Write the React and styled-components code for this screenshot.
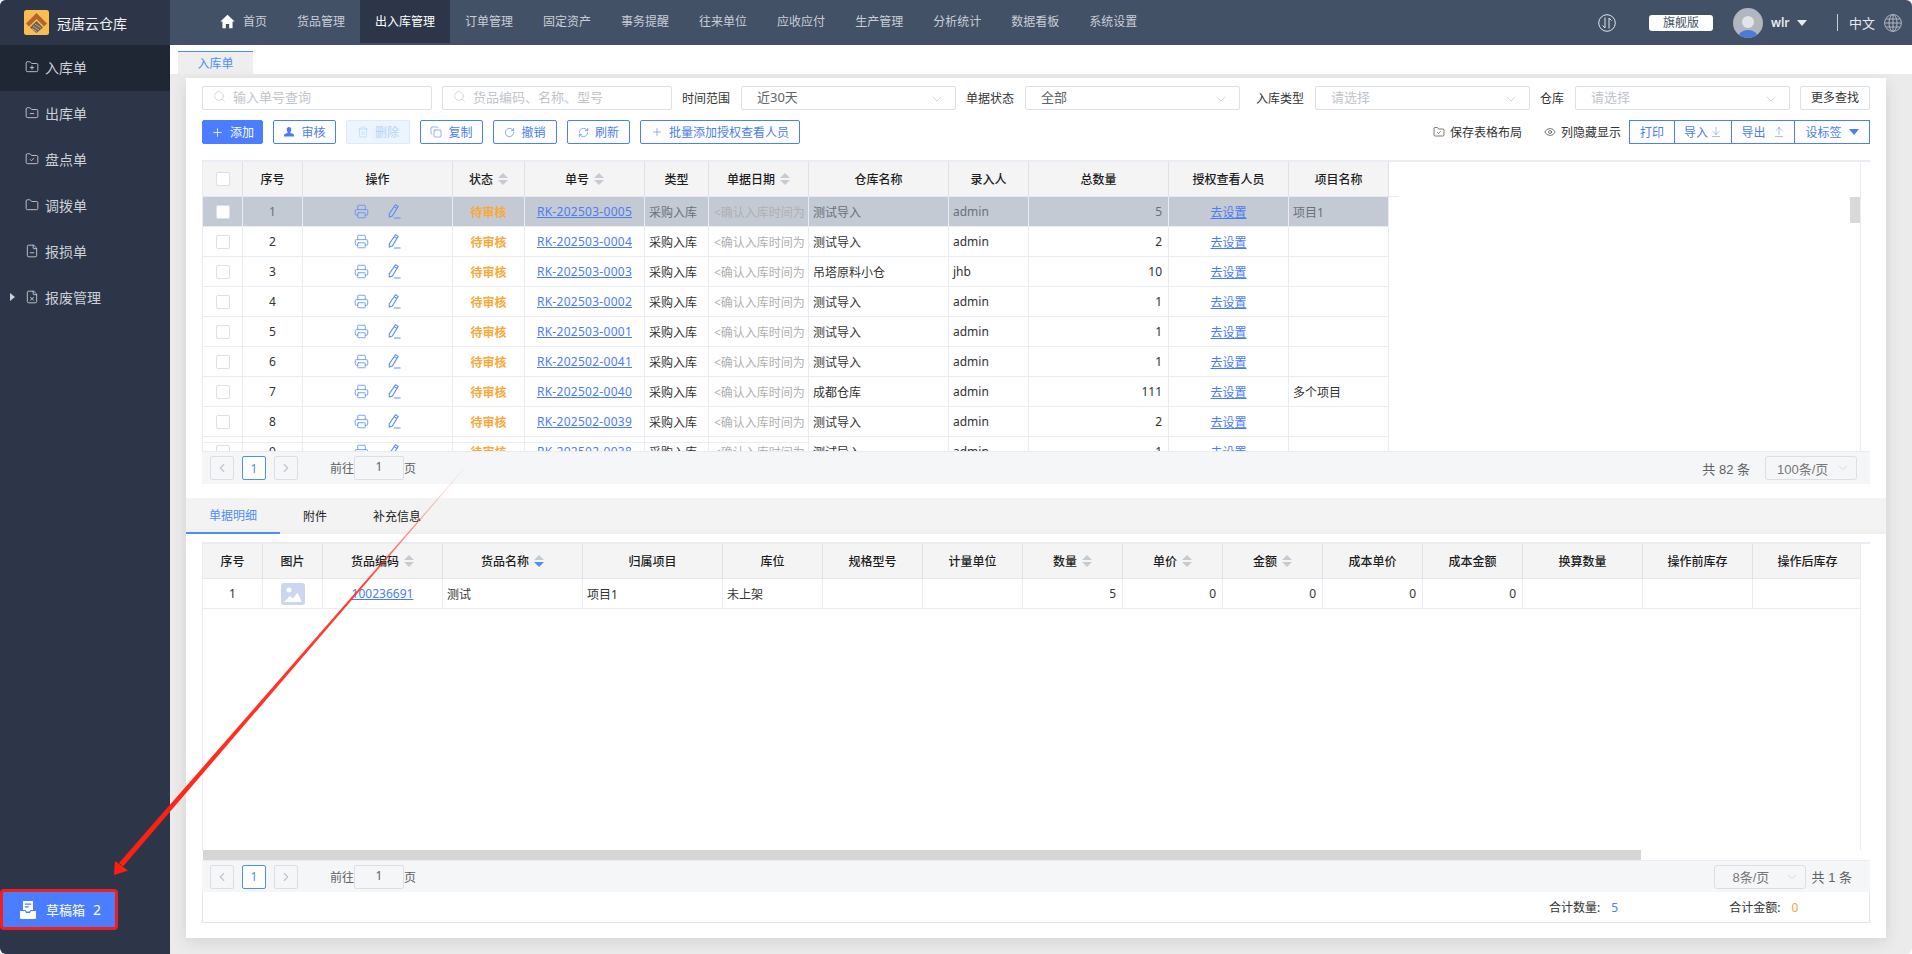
import React from 'react';
import styled, { createGlobalStyle } from 'styled-components';
import {
  Search, ChevronDown, ChevronLeft, ChevronRight, Plus, Trash2, Copy, RotateCw, RefreshCw,
  FolderPlus, FolderMinus, FolderCheck, Folder, FileMinus, FileX, Eye, ArrowDownToLine,
  ArrowUpFromLine, Printer,
} from 'lucide-react';

const BLUE = '#4a7dff';
const LINK = '#4c7cf3';
const LINE = '#e9ecf3';

const GlobalStyle = createGlobalStyle`
  html, body {
    margin: 0;
    width: 1912px;
    height: 954px;
    overflow: hidden;
    background: #fff;
    font-family: "Noto Sans", "Noto Sans CJK SC", sans-serif;
    font-size: 12px;
    color: #333;
  }
  * { box-sizing: border-box; }
`;

// Shell
const Window = styled.div`
  position: relative;
  width: 1912px;
  height: 954px;
  border-radius: 6px;
  overflow: hidden;
  display: flex;
  flex-direction: column;
`;

const TopBar = styled.header`
  height: 45px;
  flex: none;
  display: flex;
  align-items: stretch;
  background: #435166;
`;

const Brand = styled.div`
  width: 170px;
  flex: none;
  display: flex;
  align-items: center;
  gap: 8px;
  padding-left: 24px;
  background: #2d3648;
  color: #f2f3f5;
  font-size: 14px;
`;

const Nav = styled.nav`
  display: flex;
  padding-left: 35px;
  flex: 1;
`;

const NavItem = styled.div`
  height: 43px;
  padding: 0 15px;
  display: flex;
  align-items: center;
  gap: 8px;
  white-space: nowrap;
  line-height: 46px;
  color: ${(p) => (p.$active ? '#fff' : '#c9ced6')};
  background: ${(p) => (p.$active ? '#2d3648' : 'transparent')};
`;

const TopRight = styled.div`
  display: flex;
  align-items: center;
  padding-right: 10px;
  color: #e8ebef;
`;

const Edition = styled.div`
  width: 64px;
  height: 16px;
  margin: 0 20px 0 33px;
  border-radius: 3px;
  background: #fff;
  color: #435166;
  font-size: 12px;
  line-height: 16px;
  text-align: center;
`;

const UserName = styled.span`
  width: 18px;
  margin: 0 8px;
  font-weight: 600;
  font-size: 12px;
  white-space: nowrap;
`;

const Caret = styled.span`
  width: 0;
  height: 0;
  border-left: 5px solid transparent;
  border-right: 5px solid transparent;
  border-top: 6px solid ${(p) => p.$color || '#e8ebef'};
`;

const TopDivider = styled.span`
  width: 1px;
  height: 17px;
  margin: 0 11px 0 30px;
  background: #c9ced6;
`;

const Lang = styled.span`
  width: 26px;
  margin-right: 9px;
  font-size: 13px;
  white-space: nowrap;
`;

const Body = styled.div`
  flex: 1;
  display: flex;
  min-height: 0;
`;

// Left menu
const Sidebar = styled.aside`
  width: 170px;
  flex: none;
  display: flex;
  flex-direction: column;
  justify-content: space-between;
  background: #2d3648;
`;

const MenuItem = styled.div`
  position: relative;
  height: 46px;
  display: flex;
  align-items: center;
  gap: 6px;
  padding: 0 0 2px 25px;
  font-size: 14px;
  color: #ccd0d7;
  background: ${(p) => (p.$active ? '#1f2634' : 'transparent')};
`;

const MenuArrow = styled.span`
  position: absolute;
  left: 10px;
  width: 0;
  height: 0;
  border-top: 4px solid transparent;
  border-bottom: 4px solid transparent;
  border-left: 5px solid #ccd0d7;
`;

const DraftButton = styled.div`
  width: 118px;
  height: 41px;
  margin-bottom: 24px;
  display: flex;
  align-items: center;
  padding-left: 17px;
  border: 3px solid #f01f1f;
  border-radius: 4px;
  background: ${BLUE};
  color: #fff;
  font-size: 13px;
`;

const DraftLabel = styled.span`
  margin: 0 8px 0 10px;
`;

const DraftCount = styled.span`
  font-size: 14px;
`;

// Main area
const Main = styled.main`
  flex: 1;
  min-width: 0;
  display: flex;
  flex-direction: column;
`;

const TabStrip = styled.div`
  height: 29px;
  flex: none;
  padding: 6px 0 0 8px;
  background: #fff;
`;

const PageTab = styled.div`
  width: 75px;
  height: 23px;
  border-top: 1px solid #4a90f5;
  background: #eee;
  color: #4a90f5;
  line-height: 23px;
  text-align: center;
`;

const Content = styled.div`
  flex: 1;
  min-height: 0;
  padding: 4px 26px 16px 16px;
  background: #ebebeb;
`;

const Panel = styled.div`
  height: 100%;
  display: flex;
  flex-direction: column;
  box-shadow: 0 4px 14px rgba(0, 0, 0, 0.1);
`;

const ListSection = styled.section`
  height: 420px;
  flex: none;
  padding: 8px 16px 0;
  background: #fff;
`;

const FilterRow = styled.div`
  height: 24px;
  display: flex;
  align-items: center;
`;

const SearchBox = styled.div`
  width: 230px;
  height: 24px;
  flex: none;
  margin-right: 10px;
  display: flex;
  align-items: center;
  gap: 7px;
  padding: 0 0 3px 10px;
  border: 1px solid #dcdfe6;
  border-radius: 2px;
  color: #c0c4cc;
  font-size: 13px;
`;

const FieldLabel = styled.label`
  width: ${(p) => p.$w}px;
  flex: none;
  padding-right: 11px;
  text-align: right;
  color: #333;
  white-space: nowrap;
`;

const Select = styled.div`
  width: 215px;
  height: 24px;
  flex: none;
  display: flex;
  align-items: center;
  justify-content: space-between;
  padding: 0 10px 3px 15px;
  border: 1px solid #dcdfe6;
  border-radius: 2px;
  font-size: 13px;
  color: ${(p) => (p.$empty ? '#c0c4cc' : '#606266')};
`;

const SelectArrow = styled(ChevronDown)`
  position: relative;
  top: 2px;
`;

const PlainButton = styled.div`
  width: 70px;
  height: 24px;
  flex: none;
  margin-left: 10px;
  border: 1px solid #dcdfe6;
  border-radius: 2px;
  line-height: 22px;
  text-align: center;
  color: #333;
`;

const ActionRow = styled.div`
  height: 24px;
  margin-top: 10px;
  display: flex;
  align-items: center;
  gap: 10px;
`;

const ActionButton = styled.div`
  width: ${(p) => p.$w}px;
  height: 24px;
  flex: none;
  display: flex;
  align-items: center;
  justify-content: center;
  gap: 6px;
  border: 1px solid ${(p) => (p.$disabled ? '#d9ecff' : BLUE)};
  border-radius: 2px;
  background: ${(p) => (p.$primary ? BLUE : p.$disabled ? '#ecf5ff' : '#fff')};
  color: ${(p) => (p.$primary ? '#fff' : p.$disabled ? '#b3d3f7' : LINK)};
  white-space: nowrap;
`;

const ToolLink = styled.div`
  display: flex;
  align-items: center;
  gap: 5px;
  margin-right: 12px;
  color: #333;
  white-space: nowrap;
`;

const ToolSpacer = styled.div`
  flex: 1;
`;

const ButtonGroup = styled.div`
  display: flex;
  margin-left: -13px;
`;

const GroupButton = styled.div`
  width: ${(p) => p.$w}px;
  height: 24px;
  display: flex;
  align-items: center;
  justify-content: center;
  gap: ${(p) => p.$gap || 2}px;
  border: 1px solid ${BLUE};
  margin-left: -1px;
  color: ${LINK};
`;

// Tables
const TableFrame = styled.div`
  position: relative;
  margin-top: ${(p) => p.$mt || 0}px;
  height: ${(p) => p.$h}px;
  border-top: 2px solid ${LINE};
`;

const TableClip = styled.div`
  width: 1659px;
  height: 100%;
  border-left: 1px solid ${LINE};
  border-right: 1px solid ${LINE};
  overflow: hidden;
`;

const Grid = styled.table`
  table-layout: fixed;
  width: ${(p) => p.$w}px;
  border-collapse: separate;
  border-spacing: 0;
`;

const Th = styled.th`
  position: relative;
  height: 35px;
  padding: 0;
  background: #f4f4f5;
  border-right: 1px solid #dfe2e9;
  border-bottom: 1px solid #e6e8ee;
  font-size: 12px;
  font-weight: 500;
  color: #1d1d1d;
  white-space: nowrap;
`;

const Tr = styled.tr`
  background: ${(p) => (p.$selected ? '#c3cad4' : '#fff')};
  color: ${(p) => (p.$selected ? '#6b7078' : '#333')};
  ${(p) => p.$lagged && `
    td:nth-child(-n+7) { box-shadow: inset 0 5px 0 #fff, inset 0 6px 0 ${LINE}; }
  `}
`;

const Td = styled.td`
  height: 30px;
  padding: 0 ${(p) => (p.$align === 'right' ? 6 : 4)}px;
  border-right: 1px solid ${LINE};
  border-bottom: 1px solid ${LINE};
  text-align: ${(p) => p.$align || 'left'};
  white-space: nowrap;
  overflow: hidden;
  font-size: 12px;
`;

const Box = styled.span`
  display: block;
  width: 14px;
  height: 14px;
  margin: 0 auto;
  background: #fff;
  border: 1px solid #dcdfe6;
  border-radius: 2px;
`;

const OpIcons = styled.div`
  display: flex;
  justify-content: center;
  align-items: center;
  gap: 19px;
  color: #5b8ff5;
`;

const Status = styled.span`
  color: #f9a93c;
  font-weight: 600;
`;

const Link = styled.a`
  color: ${LINK};
  text-decoration: underline;
`;

const RecordLink = styled(Link)`
  letter-spacing: 0.28px;
`;

const DateHint = styled.span`
  display: block;
  color: #b0b0b0;
  overflow: hidden;
  padding-left: 1px;
`;

const Sort = styled.span`
  display: inline-flex;
  flex-direction: column;
  gap: 2px;
  margin-left: 5px;
  position: relative;
  top: -2px;
  vertical-align: middle;
`;

const SortUp = styled.i`
  width: 0;
  height: 0;
  border-left: 5px solid transparent;
  border-right: 5px solid transparent;
  border-bottom: 5px solid #c6cad1;
`;

const SortDown = styled.i`
  width: 0;
  height: 0;
  border-left: 5px solid transparent;
  border-right: 5px solid transparent;
  border-top: 5px solid ${(p) => (p.$active ? '#4a90f5' : '#c6cad1')};
`;

const ScrollThumb = styled.div`
  position: absolute;
  top: 35px;
  left: 1648px;
  width: 10px;
  height: 26px;
  background: #d9d9d9;
`;

const HeaderTail = styled.div`
  position: absolute;
  left: 1187px;
  top: 34px;
  width: 10px;
  height: 1px;
  background: ${LINE};
`;

const Pager = styled.div`
  height: ${(p) => p.$h}px;
  display: flex;
  align-items: center;
  padding: 0 13px 0 8px;
  background: #f5f6f8;
  border-top: 1px solid ${LINE};
  color: #606266;
`;

const PageBtn = styled.div`
  width: 24px;
  height: 24px;
  margin-right: 8px;
  display: flex;
  align-items: center;
  justify-content: center;
  border: 1px solid ${(p) => (p.$active ? '#4a90f5' : '#dcdfe6')};
  border-radius: 2px;
  background: ${(p) => (p.$active ? '#fff' : 'transparent')};
  color: ${(p) => (p.$active ? '#4a90f5' : '#c0c4cc')};
`;

const GotoLabel = styled.span`
  margin-left: 24px;
`;

const GotoBox = styled.div`
  width: 50px;
  height: 24px;
  border: 1px solid #dcdfe6;
  border-radius: 2px;
  line-height: 20px;
  text-align: center;
  color: #606266;
`;

const PagerRight = styled.div`
  margin-left: auto;
  margin-right: ${(p) => p.$mr || 0}px;
  display: flex;
  align-items: center;
  gap: ${(p) => p.$gap}px;
  font-family: "Liberation Sans", "Noto Sans CJK SC", sans-serif;
  font-size: 13px;
  white-space: nowrap;
`;

const SizeSelect = styled.div`
  width: 92px;
  height: 24px;
  display: flex;
  align-items: center;
  justify-content: space-between;
  padding: 0 6px 0 ${(p) => p.$pl}px;
  border: 1px solid #dcdfe6;
  border-radius: 3px;
  color: #777;
`;

const DetailTabs = styled.div`
  height: 36px;
  flex: none;
  display: flex;
  background: linear-gradient(#f3f3f3 85%, #efefef);
`;

const DetailTab = styled.div`
  height: 36px;
  padding: 0 23px;
  line-height: ${(p) => (p.$active ? 35 : 38)}px;
  color: ${(p) => (p.$active ? '#4a90f5' : '#222')};
  border-bottom: 2px solid ${(p) => (p.$active ? '#4a90f5' : 'transparent')};
`;

const DetailSection = styled.section`
  flex: 1;
  min-height: 0;
  padding: 8px 16px 15px;
  background: #fff;
`;

const ScrollTrack = styled.div`
  width: 1659px;
  height: 10px;
  margin-left: 1px;
  background: #fff;
`;

const ScrollBarThumb = styled.div`
  width: 1438px;
  height: 10px;
  background: #d6d6d6;
`;

const PicHolder = styled.div`
  width: 24px;
  height: 22px;
  margin: 0 auto;
  border-radius: 3px;
  background: #ccd6ec;
  color: #fff;
`;

const Summary = styled.div`
  height: 31px;
  display: flex;
  align-items: center;
  padding-left: 1346px;
  border: 1px solid #e4e4e4;
  border-top: none;
  color: #333;
`;

const SumValue = styled.span`
  width: ${(p) => p.$w}px;
  padding-left: 11px;
  color: ${(p) => p.$color};
`;

const ArrowLayer = styled.svg`
  position: absolute;
  left: 0;
  top: 0;
  width: 1912px;
  height: 954px;
  pointer-events: none;
`;

const HomeIcon = () => (
  <svg width="15" height="15" viewBox="0 0 16 16" fill="#fff">
    <path d="M8 .8 15.6 8H13.4v7.2H9.8v-4.6H6.2v4.6H2.6V8H.4z" />
  </svg>
);

const Logo = () => (
  <svg width="25" height="25" viewBox="0 0 25 25">
    <rect width="25" height="25" rx="2.5" fill="#f9bd52" />
    <path d="M12.5 3 23 13.5l-3 3-7.500-7.500-7.500 7.500-3-3z" fill="#b5652c" />
    <path d="M12.500 11 19 17.500 12.500 23 6 17.500z" fill="#6d5d52" />
    <path d="M9 16l6 4M11 14l6 4M8 18.500l5 3" stroke="#c9c2ba" strokeWidth=".8" />
  </svg>
);

const SyncIcon = () => (
  <svg width="18" height="18" viewBox="0 0 18 18" fill="none" stroke="#dfe3e8" strokeWidth="1">
    <circle cx="9" cy="9" r="8.300" />
    <path d="M7 3.500v10.500L4.500 11.500M11 14.500V4l2.500 2.500" />
  </svg>
);

const GlobeIcon = () => (
  <svg width="18" height="18" viewBox="0 0 18 18" fill="none" stroke="#aeb4bd" strokeWidth="1">
    <circle cx="9" cy="9" r="8.400" />
    <ellipse cx="9" cy="9" rx="4" ry="8.400" />
    <path d="M9 .6v16.800M.6 9h16.800M2 5h14M2 13h14" />
  </svg>
);

const Avatar = () => (
  <svg width="30" height="30" viewBox="0 0 30 30">
    <defs>
      <clipPath id="avatarClip"><circle cx="15" cy="15" r="15" /></clipPath>
    </defs>
    <g clipPath="url(#avatarClip)">
      <rect width="30" height="30" fill="#b1b6bf" />
      <circle cx="15" cy="14" r="6" fill="#e2e4e8" />
      <ellipse cx="15" cy="30" rx="10" ry="8" fill="#4a7bd8" />
    </g>
  </svg>
);

const PersonIcon = () => (
  <svg width="12" height="12" viewBox="0 0 12 12" fill={LINK}>
    <path d="M6 1a2.300 2.600 0 0 1 2.300 2.600C8.300 5 7.500 6 7.200 6.500c.3.800 3.300 1 3.800 2.500v1.500H1V9c.5-1.500 3.500-1.700 3.800-2.500C4.500 6 3.700 5 3.700 3.600A2.300 2.600 0 0 1 6 1z" />
  </svg>
);

const EditIcon = () => (
  <svg width="13" height="15" viewBox="0 0 13 15" fill="none" stroke="currentColor" strokeWidth="1.100">
    <path d="M7.500.8 10.200 2.400 4.300 12l-3 .9-.1-3z" />
    <path d="M6.300 2.800l2.700 1.600M6 14h6.500" />
  </svg>
);

const PicIcon = () => (
  <svg width="24" height="22" viewBox="0 0 24 22" fill="currentColor">
    <circle cx="8" cy="7" r="2.500" />
    <path d="M3 19l6-6 3 2.500 4.500-6L21 19z" />
  </svg>
);

const DraftIcon = () => (
  <svg width="16" height="18" viewBox="0 0 16 18" fill="#fff">
    <path d="M3 0h10v9h-2.500l-1 1.500h-3L5.500 9H3zM4.800 2.500v1.200h6.400V2.500zM4.800 5.200v1.200h4V5.200z" fillRule="evenodd" />
    <path d="M0 10h5l1 2h4l1-2h5v7a1 1 0 0 1-1 1H1a1 1 0 0 1-1-1z" />
  </svg>
);

const SortMark = ({ active }) => (
  <Sort>
    <SortUp />
    <SortDown $active={active} />
  </Sort>
);

const navItems = ['货品管理', '出入库管理', '订单管理', '固定资产', '事务提醒', '往来单位', '应收应付', '生产管理', '分析统计', '数据看板', '系统设置'];

const menuItems = [
  { label: '入库单', Icon: FolderPlus, active: true },
  { label: '出库单', Icon: FolderMinus },
  { label: '盘点单', Icon: FolderCheck },
  { label: '调拨单', Icon: Folder },
  { label: '报损单', Icon: FileMinus },
  { label: '报废管理', Icon: FileX, arrow: true },
];

const listCols = [40, 60, 150, 72, 120, 64, 100, 140, 80, 140, 120, 100];
const listHead = [
  { t: '序号' }, { t: '操作' }, { t: '状态', sort: true }, { t: '单号', sort: true }, { t: '类型' },
  { t: '单据日期', sort: true }, { t: '仓库名称' }, { t: '录入人' }, { t: '总数量' }, { t: '授权查看人员' }, { t: '项目名称' },
];
const listRows = [
  ['RK-202503-0005', '测试导入', 'admin', 5, '项目1'],
  ['RK-202503-0004', '测试导入', 'admin', 2, ''],
  ['RK-202503-0003', '吊塔原料小仓', 'jhb', 10, ''],
  ['RK-202503-0002', '测试导入', 'admin', 1, ''],
  ['RK-202503-0001', '测试导入', 'admin', 1, ''],
  ['RK-202502-0041', '测试导入', 'admin', 1, ''],
  ['RK-202502-0040', '成都仓库', 'admin', 111, '多个项目'],
  ['RK-202502-0039', '测试导入', 'admin', 2, ''],
  ['RK-202502-0038', '测试导入', 'admin', 1, ''],
];

const detailCols = [60, 60, 120, 140, 140, 100, 100, 100, 100, 100, 100, 100, 100, 120, 110, 110];
const detailHead = [
  { t: '序号' }, { t: '图片' }, { t: '货品编码', sort: true }, { t: '货品名称', sort: true, active: true }, { t: '归属项目' },
  { t: '库位' }, { t: '规格型号' }, { t: '计量单位' }, { t: '数量', sort: true }, { t: '单价', sort: true }, { t: '金额', sort: true },
  { t: '成本单价' }, { t: '成本金额' }, { t: '换算数量' }, { t: '操作前库存' }, { t: '操作后库存' },
];

function PagerLeft() {
  return (
    <>
      <PageBtn><ChevronLeft size={14} strokeWidth={2} /></PageBtn>
      <PageBtn $active>1</PageBtn>
      <PageBtn><ChevronRight size={14} strokeWidth={2} /></PageBtn>
      <GotoLabel>前往</GotoLabel>
      <GotoBox>1</GotoBox>
      <span>页</span>
    </>
  );
}

export default function App() {
  return (
    <Window>
      <GlobalStyle />
      <TopBar>
        <Brand><Logo />冠唐云仓库</Brand>
        <Nav>
          <NavItem><HomeIcon />首页</NavItem>
          {navItems.map((n) => (
            <NavItem key={n} $active={n === '出入库管理'}>{n}</NavItem>
          ))}
        </Nav>
        <TopRight>
          <SyncIcon />
          <Edition>旗舰版</Edition>
          <Avatar />
          <UserName>wlr</UserName>
          <Caret />
          <TopDivider />
          <Lang>中文</Lang>
          <GlobeIcon />
        </TopRight>
      </TopBar>

      <Body>
        <Sidebar>
          <div>
            {menuItems.map(({ label, Icon, active, arrow }) => (
              <MenuItem key={label} $active={active}>
                {arrow && <MenuArrow />}
                <Icon size={14} strokeWidth={1.5} />
                {label}
              </MenuItem>
            ))}
          </div>
          <DraftButton>
            <DraftIcon />
            <DraftLabel>草稿箱</DraftLabel>
            <DraftCount>2</DraftCount>
          </DraftButton>
        </Sidebar>

        <Main>
          <TabStrip><PageTab>入库单</PageTab></TabStrip>
          <Content>
            <Panel>
              <ListSection>
                <FilterRow>
                  <SearchBox><Search size={13} strokeWidth={1.2} />输入单号查询</SearchBox>
                  <SearchBox><Search size={13} strokeWidth={1.2} />货品编码、名称、型号</SearchBox>
                  <FieldLabel $w={59}>时间范围</FieldLabel>
                  <Select>近30天<SelectArrow size={16} strokeWidth={1} color="#c0c4cc" /></Select>
                  <FieldLabel $w={69}>单据状态</FieldLabel>
                  <Select>全部<SelectArrow size={16} strokeWidth={1} color="#c0c4cc" /></Select>
                  <FieldLabel $w={75}>入库类型</FieldLabel>
                  <Select $empty>请选择<SelectArrow size={16} strokeWidth={1} color="#c0c4cc" /></Select>
                  <FieldLabel $w={45}>仓库</FieldLabel>
                  <Select $empty>请选择<SelectArrow size={16} strokeWidth={1} color="#c0c4cc" /></Select>
                  <PlainButton>更多查找</PlainButton>
                </FilterRow>

                <ActionRow>
                  <ActionButton $w={61} $primary><Plus size={13} strokeWidth={1.5} />添加</ActionButton>
                  <ActionButton $w={63}><PersonIcon />审核</ActionButton>
                  <ActionButton $w={64} $disabled><Trash2 size={12} strokeWidth={1.2} />删除</ActionButton>
                  <ActionButton $w={63}><Copy size={12} strokeWidth={1.2} />复制</ActionButton>
                  <ActionButton $w={64}><RotateCw size={11} strokeWidth={1.4} />撤销</ActionButton>
                  <ActionButton $w={63}><RefreshCw size={11} strokeWidth={1.4} />刷新</ActionButton>
                  <ActionButton $w={160}><Plus size={12} strokeWidth={1.2} />批量添加授权查看人员</ActionButton>
                  <ToolSpacer />
                  <ToolLink><FolderCheck size={12} strokeWidth={1.3} />保存表格布局</ToolLink>
                  <ToolLink><Eye size={12} strokeWidth={1.3} />列隐藏显示</ToolLink>
                  <ButtonGroup>
                    <GroupButton $w={46}>打印</GroupButton>
                    <GroupButton $w={58}>导入<ArrowDownToLine size={12} strokeWidth={1} /></GroupButton>
                    <GroupButton $w={64} $gap={7}>导出<ArrowUpFromLine size={12} strokeWidth={1} /></GroupButton>
                    <GroupButton $w={76} $gap={7}>设标签<Caret $color={LINK} /></GroupButton>
                  </ButtonGroup>
                </ActionRow>

                <TableFrame $mt={16} $h={291}>
                  <TableClip>
                    <Grid $w={1186}>
                      <colgroup>
                        {listCols.map((w, i) => <col key={i} width={w} />)}
                      </colgroup>
                      <thead>
                        <tr>
                          <Th><Box /></Th>
                          {listHead.map((h) => (
                            <Th key={h.t}>{h.t}{h.sort && <SortMark />}</Th>
                          ))}
                        </tr>
                      </thead>
                      <tbody>
                        {listRows.map((r, i) => (
                          <Tr key={r[0]} $selected={i === 0} $lagged={i === 8}>
                            <Td><Box /></Td>
                            <Td $align="center">{i + 1}</Td>
                            <Td>
                              <OpIcons>
                                <Printer size={15} strokeWidth={1.3} />
                                <EditIcon />
                              </OpIcons>
                            </Td>
                            <Td $align="center"><Status>待审核</Status></Td>
                            <Td $align="center"><RecordLink>{r[0]}</RecordLink></Td>
                            <Td>采购入库</Td>
                            <Td><DateHint>&lt;确认入库时间为准&gt;</DateHint></Td>
                            <Td>{r[1]}</Td>
                            <Td>{r[2]}</Td>
                            <Td $align="right">{r[3]}</Td>
                            <Td $align="center"><Link>去设置</Link></Td>
                            <Td>{r[4]}</Td>
                          </Tr>
                        ))}
                      </tbody>
                    </Grid>
                  </TableClip>
                  <HeaderTail />
                  <ScrollThumb />
                </TableFrame>
                <Pager $h={33}>
                  <PagerLeft />
                  <PagerRight $gap={15}>
                    <span>共 82 条</span>
                    <SizeSelect $pl={11}>100条/页<ChevronDown size={14} strokeWidth={1} color="#c0c4cc" /></SizeSelect>
                  </PagerRight>
                </Pager>
              </ListSection>

              <DetailTabs>
                <DetailTab $active>单据明细</DetailTab>
                <DetailTab>附件</DetailTab>
                <DetailTab>补充信息</DetailTab>
              </DetailTabs>

              <DetailSection>
                <TableFrame $h={308}>
                  <TableClip>
                    <Grid $w={1660}>
                      <colgroup>
                        {detailCols.map((w, i) => <col key={i} width={w} />)}
                      </colgroup>
                      <thead>
                        <tr>
                          {detailHead.map((h) => (
                            <Th key={h.t}>{h.t}{h.sort && <SortMark active={h.active} />}</Th>
                          ))}
                        </tr>
                      </thead>
                      <tbody>
                        <Tr>
                          <Td $align="center">1</Td>
                          <Td><PicHolder><PicIcon /></PicHolder></Td>
                          <Td $align="center"><Link>100236691</Link></Td>
                          <Td>测试</Td>
                          <Td>项目1</Td>
                          <Td>未上架</Td>
                          <Td />
                          <Td />
                          <Td $align="right">5</Td>
                          <Td $align="right">0</Td>
                          <Td $align="right">0</Td>
                          <Td $align="right">0</Td>
                          <Td $align="right">0</Td>
                          <Td />
                          <Td />
                          <Td />
                        </Tr>
                      </tbody>
                    </Grid>
                  </TableClip>
                </TableFrame>
                <ScrollTrack><ScrollBarThumb /></ScrollTrack>
                <Pager $h={32}>
                  <PagerLeft />
                  <PagerRight $gap={6} $mr={5}>
                    <SizeSelect $pl={18}>8条/页<ChevronDown size={14} strokeWidth={1} color="#c0c4cc" /></SizeSelect>
                    <span>共 1 条</span>
                  </PagerRight>
                </Pager>
                <Summary>
                  <span>合计数量:</span>
                  <SumValue $w={129} $color={LINK}>5</SumValue>
                  <span>合计金额:</span>
                  <SumValue $w={40} $color="#f9a04c">0</SumValue>
                </Summary>
              </DetailSection>
            </Panel>
          </Content>
        </Main>
      </Body>

      {/* annotation arrow lying over the page */}
      <ArrowLayer viewBox="0 0 1912 954">
        <defs>
          <linearGradient id="arrowFade" gradientUnits="userSpaceOnUse" x1="466" y1="466" x2="114" y2="875">
            <stop offset="0" stopColor="#ff2a1a" stopOpacity="0.05" />
            <stop offset="0.3" stopColor="#ff2a1a" stopOpacity="0.9" />
            <stop offset="1" stopColor="#ff1f10" />
          </linearGradient>
        </defs>
        <polygon points="466,466 466.4,466.3 123,866.600 119,863" fill="url(#arrowFade)" />
        <polygon points="114,875 128,870.500 115,861" fill="#ff1f10" />
      </ArrowLayer>
    </Window>
  );
}
